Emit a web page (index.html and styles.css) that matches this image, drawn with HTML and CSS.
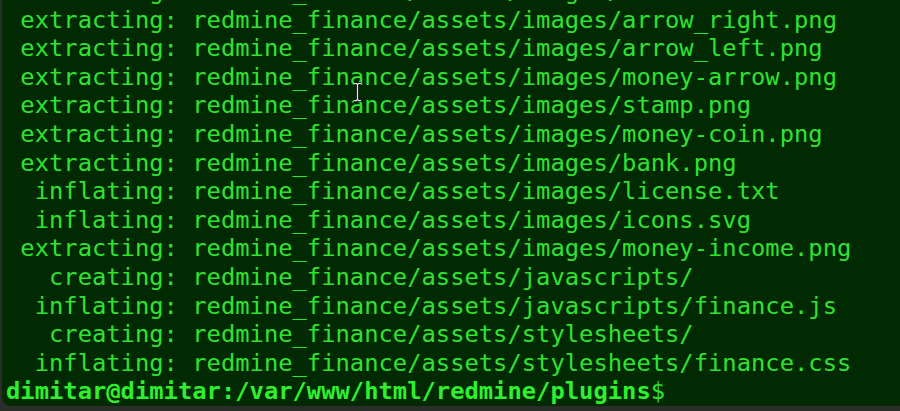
FILE: index.html
```html
<!DOCTYPE html>
<html>
<head>
<meta charset="utf-8">
<link rel="stylesheet" href="styles.css">
</head>
<body>
<div class="term">
<pre class="out">   creating: redmine_finance/assets/images/
 extracting: redmine_finance/assets/images/arrow_right.png
 extracting: redmine_finance/assets/images/arrow_left.png
 extracting: redmine_finance/assets/images/money-arrow.png
 extracting: redmine_finance/assets/images/stamp.png
 extracting: redmine_finance/assets/images/money-coin.png
 extracting: redmine_finance/assets/images/bank.png
  inflating: redmine_finance/assets/images/license.txt
  inflating: redmine_finance/assets/images/icons.svg
 extracting: redmine_finance/assets/images/money-income.png
   creating: redmine_finance/assets/javascripts/
  inflating: redmine_finance/assets/javascripts/finance.js
   creating: redmine_finance/assets/stylesheets/
  inflating: redmine_finance/assets/stylesheets/finance.css
<span class="prompt">dimitar@dimitar:/var/www/html/redmine/plugins</span>$</pre>
<svg class="ibeam" width="9" height="20" viewBox="0 0 9 20">
<path d="M1 1.5h2.5l1 1 1-1H8M4.5 2.5v15M1 18.5h2.5l1-1 1 1H8" fill="none" stroke="#111" stroke-width="2.6"/>
<path d="M1 1.5h2.5l1 1 1-1H8M4.5 2.5v15M1 18.5h2.5l1-1 1 1H8" fill="none" stroke="#e8e8e8" stroke-width="1.2"/>
</svg>
</div>
</body>
</html>
```
FILE: styles.css
```css
html, body {
  margin: 0;
  padding: 0;
  background: #2b2d2b;
  overflow: hidden;
}
.term {
  position: relative;
  height: 406px;
  margin-left: 2px;
  background: #022a02;
  border-bottom-left-radius: 9px;
  display: flex;
  flex-direction: column;
  justify-content: flex-end;
  overflow: hidden;
  padding-left: 4px;
}
.out {
  margin: 0;
  font-family: "DejaVu Sans Mono", monospace;
  font-size: 23.8px;
  line-height: 28.6px;
  color: #30e230;
  white-space: pre;
}
.prompt {
  font-weight: bold;
  color: #2ef02e;
}
.ibeam {
  position: absolute;
  left: 351px;
  top: 82px;
}
```
